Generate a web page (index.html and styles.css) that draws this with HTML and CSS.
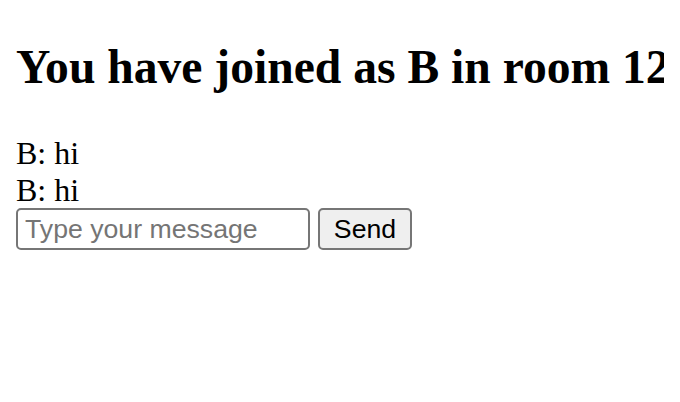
FILE: index.html
```html
<!DOCTYPE html>
<html>
<head>
<meta charset="utf-8">
<link rel="stylesheet" href="styles.css">
</head>
<body>
<h2 class="title">You have joined as B in room 123</h2>
<div class="messages">
  <div class="msg">B: hi</div>
  <div class="msg">B: hi</div>
</div>
<form class="composer">
  <input class="field" type="text" placeholder="Type your message">
  <button class="send" type="button">Send</button>
</form>
</body>
</html>
```
FILE: styles.css
```css
html {
  background: #fff;
  overflow: hidden;
}
body {
  margin: 16px;
  font-family: "Liberation Serif", "Times New Roman", serif;
  font-size: 32px;
  color: #000;
  white-space: nowrap;
}
.title {
  font-size: 47.6px;
  font-weight: bold;
  margin: 24px -16px 40px 0;
  line-height: 1.15;
}
.messages {
  line-height: 36.8px;
}
.composer {
  display: flex;
  gap: 8px;
  margin: 0;
}
.field {
  box-sizing: border-box;
  width: 294px;
  height: 42px;
  padding: 2px 7px;
  border: 2px solid #767676;
  border-radius: 5px;
  font-family: "Liberation Sans", Arial, sans-serif;
  font-size: 26.67px;
  color: #000;
  background: #fff;
  margin: 0;
  outline: none;
}
.field::placeholder {
  color: #757575;
}
.send {
  box-sizing: border-box;
  height: 42px;
  width: 94px;
  padding: 0 12px;
  border: 2px solid #767676;
  border-radius: 5px;
  background: #efefef;
  font-family: "Liberation Sans", Arial, sans-serif;
  font-size: 26.67px;
  color: #000;
  margin: 0;
}
```
